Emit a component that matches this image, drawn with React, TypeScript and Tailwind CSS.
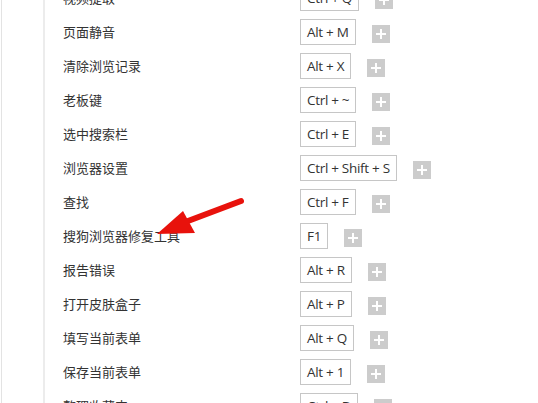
import React from "react";

interface Shortcut {
  label: string;
  keys: string;
}

const shortcuts: Shortcut[] = [
  { label: "视频提取", keys: "Ctrl + Q" },
  { label: "页面静音", keys: "Alt + M" },
  { label: "清除浏览记录", keys: "Alt + X" },
  { label: "老板键", keys: "Ctrl + ~" },
  { label: "选中搜索栏", keys: "Ctrl + E" },
  { label: "浏览器设置", keys: "Ctrl + Shift + S" },
  { label: "查找", keys: "Ctrl + F" },
  { label: "搜狗浏览器修复工具", keys: "F1" },
  { label: "报告错误", keys: "Alt + R" },
  { label: "打开皮肤盒子", keys: "Alt + P" },
  { label: "填写当前表单", keys: "Alt + Q" },
  { label: "保存当前表单", keys: "Alt + 1" },
  { label: "整理收藏夹", keys: "Ctrl + D" },
];

const PlusButton = () => (
  <button className="ml-4 mt-[3px] flex h-[18px] w-[18px] items-center justify-center bg-[#cccccc]">
    <svg width="10" height="10" viewBox="0 0 10 10">
      <path d="M5 0v10M0 5h10" stroke="#fff" strokeWidth="2" />
    </svg>
  </button>
);

export default function App() {
  return (
    <div className="relative h-[403px] w-[538px] overflow-hidden bg-white">
      <div className="flex h-full">
        <div className="w-[1px] bg-[#e3e3e3] ml-[1px]" />
        <div className="w-[41px]" />
        <div className="w-[2px] bg-[#ececec]" />
        <div className="flex-1 pl-[18px] -mt-[19px]">
          {shortcuts.map((s, i) => (
            <div key={i} className="flex h-[34px] items-center">
              <span
                className="w-[237px] text-[13px] text-[#333]"
                style={{ fontFamily: '"Noto Sans CJK SC", sans-serif' }}
              >
                {s.label}
              </span>
              <span
                className="flex h-[26px] items-center border border-[#c6c6c6] px-[6px] text-[13.5px] tracking-[-0.3px] text-[#333]"
                style={{ fontFamily: '"Open Sans", sans-serif' }}
              >
                {s.keys}
              </span>
              <PlusButton />
            </div>
          ))}
        </div>
      </div>

      {/* red annotation arrow */}
      <svg className="pointer-events-none absolute left-0 top-0" width="538" height="403">
        <line x1="241" y1="201" x2="180" y2="224" stroke="#e8120c" strokeWidth="6" strokeLinecap="round" />
        <polygon points="157,234 183,211 195,233" fill="#e8120c" />
      </svg>
    </div>
  );
}
